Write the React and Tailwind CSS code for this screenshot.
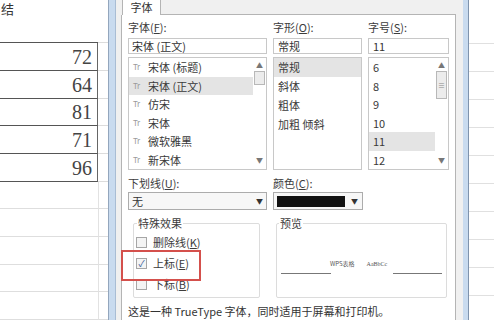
import React from 'react';

const ui = { fontFamily: '"Noto Sans CJK SC", "Noto Sans", sans-serif' };

const fonts = ['宋体 (标题)', '宋体 (正文)', '仿宋', '宋体', '微软雅黑', '新宋体'];
const styles = ['常规', '斜体', '粗体', '加粗 倾斜'];
const sizes = ['6', '8', '9', '10', '11', '12'];
const scores = ['72', '64', '81', '71', '96'];

function Label({ text, k, after = '):' }) {
  return (
    <div className="h-[14px] text-[11px] leading-[14px] text-[#3c3c3c]">
      {text}(<span className="underline">{k}</span>{after}
    </div>
  );
}

function TtIcon() {
  return <span className="w-[9px] mr-[6px] text-[8px] leading-none text-[#9a9a9a] tracking-tighter">Tr</span>;
}

function ScrollBar({ thumb, grip }) {
  return (
    <div className="w-[13px] flex flex-col items-center pt-[2px]">
      <span className="text-[7px] leading-[10px] text-[#777]">▲</span>
      <div className={`w-[11px] ${thumb} border border-[#b8b8b8] bg-[#ececec] flex items-center justify-center text-[7px] text-[#888]`}>
        {grip ? '≡' : ''}
      </div>
      <div className="flex-1" />
      <span className="text-[7px] leading-[10px] text-[#777] mb-[4px]">▼</span>
    </div>
  );
}

function Check({ checked, children }) {
  return (
    <div className="flex items-center h-[21px] text-[11px] text-[#3c3c3c]">
      <div className="w-[11px] h-[11px] border border-[#a6a6a6] bg-[#f4f4f4] mr-[6px] flex items-center justify-center text-[9px] leading-none text-[#3a5a9a]">
        {checked ? '✓' : ''}
      </div>
      {children}
    </div>
  );
}

export default function App() {
  return (
    <div className="relative w-[494px] h-[320px] overflow-hidden bg-white flex" style={ui}>
      {/* left sheet */}
      <div className="w-[108px] shrink-0 flex flex-col">
        <div className="h-[44px] flex">
          <div className="w-[98px] border-b border-[#555] pl-[1px] text-[13px] leading-[17px] text-[#333]">结</div>
          <div className="w-[10px] border-b border-[#dcdcdc]" />
        </div>
        {scores.map((s) => (
          <div key={s} className="h-[28px] flex">
            <div className="w-[98px] border-r border-[#666] border-b border-b-[#555] flex items-end justify-end pr-[5px] pb-[1px] text-[20px] leading-[24px] text-[#444]" style={{ fontFamily: '"Liberation Serif", serif' }}>
              {s}
            </div>
            <div className="w-[10px] border-b border-[#dcdcdc]" />
          </div>
        ))}
        {[0, 1, 2, 3, 4].map((i) => (
          <div key={i} className="h-[28px] flex">
            <div className="w-[99px] border-r border-r-[#e2e2e2] border-b border-b-[#dedede]" />
            <div className="w-[9px] border-b border-[#dedede]" />
          </div>
        ))}
      </div>

      {/* dialog */}
      <div className="w-[361px] shrink-0 flex h-[320px]">
        <div className="w-[1px] bg-[#93a6bd]" />
        <div className="w-[6px] bg-[#c9dbef]" />
        <div className="w-[1px] bg-[#a9bdd4]" />
        <div className="w-[5px] bg-[#f0f0f0]" />
        <div className="w-[335px] flex flex-col bg-[#f0f0f0]">
          {/* tab strip */}
          <div className="h-[15px] flex">
            <div className="w-[1px]" />
            <div className="w-[39px] bg-white border-l border-r border-[#b4b4b4] flex justify-center text-[11px] leading-[14px] text-[#333]">字体</div>
            <div className="flex-1 border-b border-[#b4b4b4]" />
          </div>
          {/* page */}
          <div className="flex-1 bg-white border-l border-r border-[#b4b4b4] px-[6px] pt-[5px]">
            <div className="flex gap-[5px]">
              {/* font column */}
              <div className="w-[139px] flex flex-col">
                <Label text="字体" k="F" />
                <div className="mt-[4px] h-[16px] border border-[#c8c8c8] pl-[3px] text-[11px] leading-[14px] text-[#333]">宋体 (正文)</div>
                <div className="mt-[3px] h-[113px] border border-[#c8c8c8] flex">
                  <div className="flex-1 flex flex-col">
                    {fonts.map((f, i) => (
                      <div key={f} className={`h-[19px] flex items-center pl-[4px] text-[11px] text-[#3a3a3a] ${i === 1 ? 'bg-[#e4e4e4]' : ''}`}>
                        <TtIcon />
                        {f}
                      </div>
                    ))}
                  </div>
                  <ScrollBar thumb="h-[14px] mt-[1px]" />
                </div>
              </div>
              {/* style column */}
              <div className="w-[89px] flex flex-col ml-[1px]">
                <Label text="字形" k="O" />
                <div className="mt-[4px] h-[16px] border border-[#c8c8c8] pl-[4px] text-[11px] leading-[14px] text-[#333]">常规</div>
                <div className="mt-[3px] h-[113px] border border-[#c8c8c8] flex flex-col">
                  {styles.map((s, i) => (
                    <div key={s} className={`h-[19px] flex items-center pl-[4px] text-[11px] text-[#3a3a3a] ${i === 0 ? 'bg-[#e4e4e4]' : ''}`}>{s}</div>
                  ))}
                </div>
              </div>
              {/* size column */}
              <div className="w-[81px] flex flex-col ml-[1px]">
                <Label text="字号" k="S" />
                <div className="mt-[4px] h-[16px] border border-[#c8c8c8] pl-[4px] text-[11px] leading-[14px] text-[#333]">11</div>
                <div className="mt-[3px] h-[113px] border border-[#c8c8c8] flex">
                  <div className="flex-1 flex flex-col">
                    {sizes.map((s) => (
                      <div key={s} className={`h-[19px] flex items-center pl-[4px] text-[11px] text-[#3a3a3a] ${s === '11' ? 'bg-[#e4e4e4]' : ''}`}>{s}</div>
                    ))}
                  </div>
                  <ScrollBar thumb="h-[28px] mt-[1px]" grip />
                </div>
              </div>
            </div>

            {/* underline / color */}
            <div className="flex gap-[5px] mt-[6px]">
              <div className="w-[139px] flex flex-col">
                <Label text="下划线" k="U" />
                <div className="mt-[2px] h-[18px] border border-[#acacac] bg-[#f7f7f7] flex items-center pl-[3px] pr-[3px] text-[11px] text-[#333]">
                  <span className="flex-1">无</span>
                  <span className="text-[7px] text-[#333]">▼</span>
                </div>
              </div>
              <div className="w-[90px] flex flex-col ml-[1px]">
                <Label text="颜色" k="C" />
                <div className="mt-[2px] h-[18px] border border-[#acacac] bg-[#f7f7f7] flex items-center pl-[3px] pr-[4px]">
                  <div className="w-[68px] h-[11px] bg-[#111]" />
                  <span className="flex-1 text-right text-[7px] text-[#333]">▼</span>
                </div>
              </div>
            </div>

            {/* effects + preview */}
            <div className="flex mt-[13px] h-[75px]">
              <div className="w-[127px] ml-[5px] relative border border-[#dcdcdc] rounded-[2px] pl-[2px] pt-[8px]">
                <span className="absolute left-[3px] -top-[8px] bg-white px-[1px] text-[11px] leading-[14px] text-[#3c3c3c]">特殊效果</span>
                <Check>删除线(<span className="underline">K</span>)</Check>
                <Check checked>上标(<span className="underline">E</span>)</Check>
                <Check>下标(<span className="underline">B</span>)</Check>
              </div>
              <div className="w-[171px] ml-[16px] relative border border-[#dcdcdc] rounded-[2px]">
                <span className="absolute left-[2px] -top-[8px] bg-white px-[1px] text-[11px] leading-[14px] text-[#3c3c3c]">预览</span>
                <div className="flex items-end mt-[36px] px-[4px]">
                  <div className="w-[50px] h-[1px] bg-[#777] mb-[3px]" />
                  <span className="-ml-[1px] text-[6px] leading-[8px] text-[#555] mb-[9px]">WPS表格</span>
                  <span className="ml-[12px] text-[6px] leading-[8px] text-[#555] mb-[9px]" style={{ fontFamily: '"Liberation Serif", serif' }}>AaBbCc</span>
                  <div className="flex-1" />
                  <div className="w-[49px] h-[1px] bg-[#777] mb-[3px]" />
                </div>
              </div>
            </div>

            <div className="mt-[6px] text-[11px] leading-[14px] text-[#333]">这是一种 TrueType 字体，同时适用于屏幕和打印机。</div>
          </div>
        </div>
        <div className="w-[7px] bg-[#f0f0f0]" />
        <div className="w-[5px] bg-[#c9dbef]" />
        <div className="w-[1px] bg-[#7f93ad]" />
      </div>

      {/* right sheet */}
      <div className="flex-1 flex flex-col">
        <div className="h-[44px] border-b border-[#e0e0e0]" />
        {[0, 1, 2, 3, 4, 5, 6, 7, 8].map((i) => (
          <div key={i} className="h-[28px] shrink-0 border-b border-[#e0e0e0]" />
        ))}
      </div>

      {/* annotation */}
      <div className="absolute left-[121px] top-[250px] w-[80px] h-[31px] border-2 border-[#d4504c] pointer-events-none" />
    </div>
  );
}
